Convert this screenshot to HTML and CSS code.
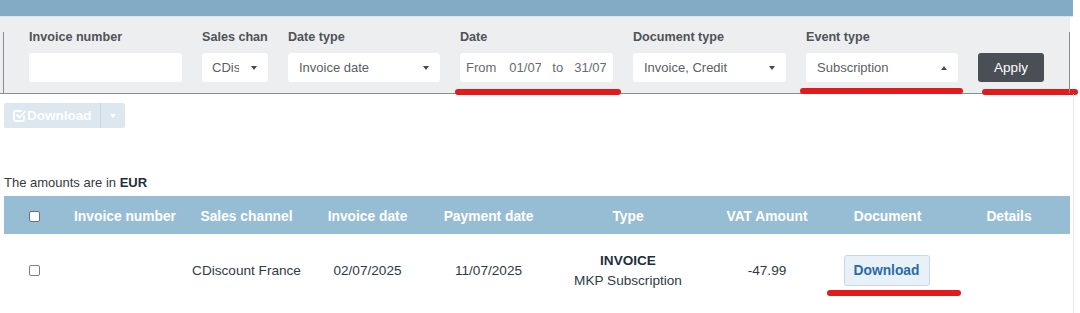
FILE: index.html
```html
<!DOCTYPE html>
<html lang="en">
<head>
<meta charset="utf-8">
<title>Invoices</title>
<link rel="stylesheet" href="styles.css">
</head>
<body>
<div class="topbar"></div>
<section class="filters">
  <div class="field f-invoice">
    <label class="flabel">Invoice number</label>
    <div class="control"></div>
  </div>
  <div class="field f-channel">
    <label class="flabel">Sales chan</label>
    <div class="control select"><span class="clip c-channel">CDiscount France</span><span class="caret"></span></div>
  </div>
  <div class="field f-datetype">
    <label class="flabel">Date type</label>
    <div class="control select"><span class="val">Invoice date</span><span class="caret"></span></div>
  </div>
  <div class="field f-date">
    <label class="flabel">Date</label>
    <div class="control daterange">
      <span>From</span><span class="clip c-date">01/07/2025</span><span>to</span><span class="clip c-date">31/07/2025</span>
    </div>
  </div>
  <div class="field f-doctype">
    <label class="flabel">Document type</label>
    <div class="control select"><span class="val">Invoice, Credit</span><span class="caret"></span></div>
  </div>
  <div class="field f-event">
    <label class="flabel">Event type</label>
    <div class="control select"><span class="val">Subscription</span><span class="caret up"></span></div>
  </div>
  <div class="field f-apply">
    <span class="flabel">&nbsp;</span>
    <button class="apply">Apply</button>
  </div>
  <span class="mark mark-date"></span>
  <span class="mark mark-event"></span>
  <span class="mark mark-apply"></span>
</section>

<main class="content">
  <div class="split">
    <span class="split-main">
      <svg class="chk-icon" width="13" height="13" viewBox="0 0 13 13" fill="none" stroke="#ffffff" stroke-width="1.8" stroke-linecap="round" stroke-linejoin="round"><path d="M11 7v3.5a1.5 1.5 0 0 1-1.5 1.5h-7A1.5 1.5 0 0 1 1 10.5v-7A1.5 1.5 0 0 1 2.5 2H8"/><path d="M4 6l2.5 2.5L12 2.5"/></svg>Download
    </span>
    <span class="split-caret"><span class="caret light"></span></span>
  </div>

  <p class="currency">The amounts are in <strong>EUR</strong></p>

  <table class="grid">
    <colgroup>
      <col class="w-chk"><col class="w-num"><col class="w-std"><col class="w-std"><col class="w-std"><col class="w-type"><col class="w-vat"><col class="w-std"><col class="w-det">
    </colgroup>
    <thead>
      <tr>
        <th><span class="cb"></span></th>
        <th>Invoice number</th>
        <th>Sales channel</th>
        <th>Invoice date</th>
        <th>Payment date</th>
        <th>Type</th>
        <th>VAT Amount</th>
        <th>Document</th>
        <th>Details</th>
      </tr>
    </thead>
    <tbody>
      <tr>
        <td><span class="cb"></span></td>
        <td></td>
        <td>CDiscount France</td>
        <td>02/07/2025</td>
        <td>11/07/2025</td>
        <td><strong class="type">INVOICE</strong><br>MKP Subscription</td>
        <td>-47.99</td>
        <td><button class="doc-btn">Download</button></td>
        <td></td>
      </tr>
    </tbody>
  </table>
  <span class="mark mark-doc"></span>
</main>
</body>
</html>
```

FILE: styles.css
```css
* { box-sizing: border-box; }

html, body {
  margin: 0;
  padding: 0;
  background: #ffffff;
  font-family: "Liberation Sans", Arial, sans-serif;
  color: #2f3b46;
  overflow: hidden;
}

body {
  position: relative;
  width: 1080px;
  height: 313px;
}

.topbar {
  width: 1073px;
  height: 17px;
  background: #84abc6;
  border-bottom: 1px solid #d9e5ee;
}

.filters {
  position: relative;
  width: 1070px;
  height: 77px;
  background: #eceef0;
  display: flex;
  align-items: flex-start;
  gap: 20px;
  padding: 13px 0 0 29px;
  border-bottom: 1px solid #8a8d90;
}

.filters::before,
.filters::after {
  content: "";
  position: absolute;
  top: 15px;
  bottom: 0;
  width: 1px;
  background: #8a8d90;
}
.filters::before { left: 3px; }
.filters::after { right: 0; }

.field {
  display: flex;
  flex-direction: column;
}

.flabel {
  display: block;
  height: 15px;
  line-height: 15px;
  margin-bottom: 8px;
  font-size: 12.6px;
  font-weight: bold;
  color: #4e5358;
  white-space: nowrap;
  overflow: hidden;
}

.f-invoice { width: 153px; }
.f-channel { width: 66px; }
.f-datetype { width: 152px; }
.f-date { width: 153px; }
.f-doctype { width: 153px; }
.f-event { width: 152px; }
.f-apply { width: 66px; }

.control {
  height: 29px;
  background: #ffffff;
  border-radius: 3px;
  display: flex;
  align-items: center;
  padding: 0 11px;
  font-size: 13px;
  color: #5a5f64;
  white-space: nowrap;
}

.select {
  justify-content: space-between;
}

.f-channel .control { padding: 0 11px 0 10px; }

.clip {
  display: inline-block;
  overflow: hidden;
  white-space: nowrap;
}
.c-channel { width: 27px; }
.c-date { width: 32px; }

.daterange {
  gap: 11px;
  padding: 0 6px;
  color: #666b70;
}
.daterange span:first-child { margin-right: 2px; }

.caret {
  display: inline-block;
  width: 0;
  height: 0;
  border-left: 3.5px solid transparent;
  border-right: 3.5px solid transparent;
  border-top: 4px solid #444a50;
  flex: none;
}
.caret.up {
  border-top: 0;
  border-bottom: 4px solid #444a50;
}
.caret.light {
  border-top-color: #ffffff;
}

.apply {
  height: 29px;
  width: 66px;
  border: 0;
  border-radius: 3px;
  background: #4a4f56;
  color: #ffffff;
  font-family: "Liberation Sans", Arial, sans-serif;
  font-size: 13.5px;
  padding: 0;
}

.mark {
  position: absolute;
  height: 6px;
  border-radius: 3px;
  background: #e31a1c;
}
.mark-date { left: 455px; top: 72px; width: 166px; }
.mark-event { left: 800px; top: 71px; width: 163px; }
.mark-apply { left: 982px; top: 72px; width: 96px; }

.content {
  position: relative;
  padding: 9px 0 0 4px;
  width: 1074px;
  height: 219px;
  border-right: 1px solid #e8e8e8;
}

.split {
  display: flex;
  width: 121px;
  height: 25px;
  background: #dde7ef;
  border-radius: 2px;
}

.split-main {
  display: flex;
  align-items: center;
  gap: 1px;
  width: 97px;
  padding-left: 9px;
  font-size: 13.5px;
  font-weight: bold;
  color: #ffffff;
  border-right: 1px solid #ccd9e3;
}

.split-caret {
  flex: 1;
  display: flex;
  align-items: center;
  justify-content: center;
}

.currency {
  margin: 47px 0 0 0;
  height: 15px;
  line-height: 15px;
  font-size: 13px;
  color: #333a40;
}
.currency strong { color: #1b3042; }

.grid {
  margin-top: 6px;
  width: 1066px;
  border-collapse: collapse;
  table-layout: fixed;
}

.w-chk { width: 60px; }
.w-num { width: 122px; }
.w-std { width: 121px; }
.w-type { width: 158px; }
.w-vat { width: 120px; }
.w-det { width: 122px; }

.grid th {
  height: 38px;
  background: #97bdd4;
  color: #ffffff;
  font-size: 13.8px;
  font-weight: bold;
  text-align: center;
  vertical-align: middle;
  padding: 2px 0 0 0;
  white-space: nowrap;
}

.grid td {
  height: 72px;
  text-align: center;
  vertical-align: middle;
  font-size: 13.6px;
  line-height: 20px;
  color: #2f3b46;
  padding: 1px 0 0 0;
}

.type {
  color: #1c2f40;
  font-size: 13.6px;
}

.cb {
  display: inline-block;
  width: 11px;
  height: 11px;
  border: 1px solid #7b7f83;
  border-radius: 2px;
  background: #ffffff;
  vertical-align: middle;
}
.grid th .cb { border-color: #6c737a; }

.doc-btn {
  width: 86px;
  height: 31px;
  background: #e9f1f8;
  border: 1px solid #c7d8e6;
  border-radius: 3px;
  color: #2b6ca6;
  font-family: "Liberation Sans", Arial, sans-serif;
  font-size: 13.8px;
  font-weight: bold;
  padding: 0;
  margin-left: -2px;
}

.mark-doc { left: 827px; top: 196px; width: 134px; }
```
